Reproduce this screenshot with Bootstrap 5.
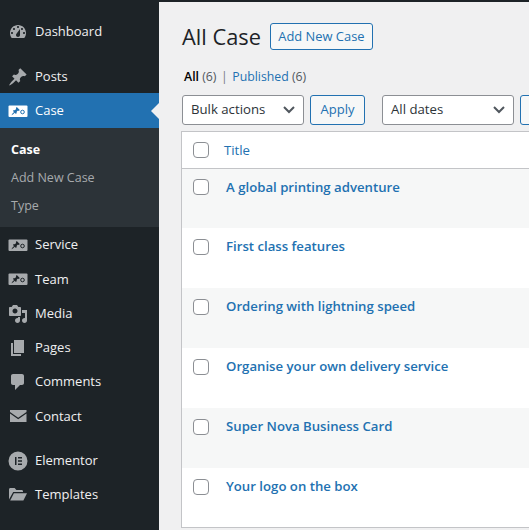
<!DOCTYPE html>
<html lang="en">
<head>
  <meta charset="UTF-8" />
  <title>All Case</title>
  <link href="https://cdn.jsdelivr.net/npm/bootstrap@5.3.0/dist/css/bootstrap.min.css" rel="stylesheet" />
  <style>
    html, body { height: 100%; overflow: hidden; }
    body { background: #f0f0f1; font-family: "Open Sans", "Noto Sans", sans-serif; font-size: 13px; color: #3c434a; }
    .wp-side { width: 159px; flex: none; background: #1d2327; padding-top: 14px; }
    .wp-item { height: 34.25px; padding-top: 1px; color: #f0f0f1; font-size: 13px; text-decoration: none; position: relative; }
    .wp-item:hover { color: #f0f0f1; }
    .wp-ico { width: 35px; flex: none; display: flex; justify-content: center; }
    .wp-ico svg { width: 20px; height: 20px; fill: #a7aaad; display: block; }
    .wp-gap { height: 10.9px; }
    .wp-gap-low { height: 10.4px; }
    .wp-active { background: #2271b1; color: #fff; height: 35px; padding-top: 0; }
    .wp-active::after { content: ""; position: absolute; right: 0; top: 10px; border: 8px solid transparent; border-right-color: #f0f0f1; border-left-width: 0; }
    .wp-sub { background: #2c3338; height: 99px; padding-top: 8px; }
    .wp-sub a { display: flex; align-items: center; height: 28.2px; padding-left: 11px; font-size: 12.5px; color: #a7aaad; text-decoration: none; }
    .wp-sub a.on { color: #fff; font-weight: 700; }
    .wp-main { min-width: 0; overflow: hidden; border-top: 2px solid #1d2327; padding-left: 22px; }
    .wp-head { margin-top: 21px; height: 27px; padding-left: 1px; }
    .wp-head h1 { font-size: 21.8px; font-weight: 400; color: #1d2327; margin: 0; padding-top: 2px; }
    .wp-btn { display: inline-flex; align-items: center; justify-content: center; flex: none; background: #f6f7f7; border: 1px solid #2271b1; border-radius: 3px; color: #2271b1; font-size: 12.9px; padding: 0; text-decoration: none; }
    .wp-add { width: 103px; height: 27px; margin-left: 9px; padding-top: 1px; }
    .wp-filters { margin-top: 18px; height: 18px; font-size: 12.3px; color: #50575e; padding-left: 3px; }
    .wp-filters a { color: #2271b1; text-decoration: none; }
    .wp-filters b { color: #000; font-weight: 600; }
    .wp-filters i { font-style: normal; color: #787c82; margin: 0 4.5px; }
    .wp-bar { margin-top: 9px; height: 30px; flex-wrap: nowrap; padding-left: 1px; }
    .wp-select { flex: none; height: 30px; border: 1px solid #8c8f94; border-radius: 3px; background: #fff; padding-left: 8px; padding-right: 8px; font-size: 13.2px; color: #2c3338; }
    .wp-select svg { width: 12px; height: 8px; fill: none; stroke: #50575e; stroke-width: 2; }
    .wp-bulk { width: 122px; }
    .wp-dates { width: 132px; margin-left: 17px; }
    .wp-apply { width: 55px; height: 30px; margin-left: 6px; font-size: 13px; }
    .wp-filter { width: 60px; height: 30px; margin-left: 6px; }
    .wp-table { margin-top: 6px; width: 420px; background: #fff; border: 1px solid #c3c4c7; }
    .wp-th { height: 37px; border-bottom: 1px solid #c3c4c7; color: #2271b1; font-size: 13.2px; }
    .wp-tr { height: 60px; align-items: flex-start; background: #fff; }
    .wp-tr:nth-child(odd) { background: #f6f7f7; }
    .wp-tr:first-child, .wp-tr:last-child { height: 59px; }
    .wp-tr a { color: #2271b1; font-weight: 600; font-size: 13.2px; text-decoration: none; line-height: 18px; margin-top: 8.5px; margin-left: 17px; }
    .wp-check { flex: none; width: 16px; height: 16px; border: 1px solid #8c8f94; border-radius: 4px; background: #fff; margin-left: 11px; }
    .wp-tr .wp-check { margin-top: 11px; }
    .wp-tr:first-child .wp-check { margin-top: 10px; }
    .wp-th span { margin-left: 15px; padding-top: 1px; }
  </style>
</head>
<body class="d-flex">
  <nav class="wp-side">
    <a class="wp-item d-flex align-items-center" href="#"><span class="wp-ico"><svg viewBox="0 0 20 20"><path fill-rule="evenodd" d="M3.76 16h12.48c1.100-1.370 1.760-3.110 1.760-5 0-4.420-3.580-8-8-8s-8 3.580-8 8c0 1.890.66 3.630 1.760 5zM10 4c.55 0 1 .45 1 1s-.45 1-1 1-1-.45-1-1 .45-1 1-1zM6 6c.55 0 1 .45 1 1s-.45 1-1 1-1-.45-1-1 .45-1 1-1zm8 0c.55 0 1 .45 1 1s-.45 1-1 1-1-.45-1-1 .45-1 1-1zm-5.370 5.550L12 7v6c0 1.100-.9 2-2 2s-2-.9-2-2c0-.57.24-1.080.63-1.450zM4 10c.55 0 1 .45 1 1s-.45 1-1 1-1-.45-1-1 .45-1 1-1zm12 0c.55 0 1 .45 1 1s-.45 1-1 1-1-.45-1-1 .45-1 1-1z"/></svg></span>Dashboard</a>
    <div class="wp-gap"></div>
    <a class="wp-item d-flex align-items-center" href="#"><span class="wp-ico"><svg viewBox="0 0 20 20"><path d="M10.440 3.020l1.820-1.820 6.360 6.350-1.830 1.820c-1.050-.68-2.480-.57-3.410.36l-.75.75c-.92.93-1.040 2.350-.35 3.410l-1.830 1.820-2.410-2.410-2.800 2.790c-.42.42-3.380 2.710-3.800 2.290s1.860-3.390 2.280-3.810l2.790-2.790L4.100 9.360l1.830-1.820c1.050.69 2.480.57 3.400-.36l.75-.75c.93-.92 1.050-2.350.36-3.410z"/></svg></span>Posts</a>
    <a class="wp-item wp-active d-flex align-items-center" href="#"><span class="wp-ico"><svg viewBox="0 0 20 20"><rect x=".5" y="4.500" width="19" height="11.500" rx="1" fill="#fff"/><path transform="translate(3 5.500) scale(.47)" d="M10.440 3.020l1.820-1.820 6.360 6.350-1.830 1.820c-1.050-.68-2.480-.57-3.410.36l-.75.75c-.92.93-1.040 2.350-.35 3.410l-1.830 1.820-2.410-2.410-2.800 2.790c-.42.42-3.380 2.710-3.800 2.290s1.860-3.390 2.280-3.810l2.790-2.790L4.100 9.360l1.830-1.820c1.050.69 2.480.57 3.400-.36l.75-.75c.93-.92 1.050-2.350.36-3.410z" fill="#2271b1"/><circle cx="14.500" cy="11" r="1.800" fill="none" stroke="#2271b1" stroke-width="1"/></svg></span>Case</a>
    <div class="wp-sub">
      <a class="on" href="#">Case</a>
      <a href="#">Add New Case</a>
      <a href="#">Type</a>
    </div>
    <a class="wp-item d-flex align-items-center" href="#"><span class="wp-ico"><svg viewBox="0 0 20 20"><rect x=".5" y="4.500" width="19" height="11.500" rx="1"/><path transform="translate(3 5.500) scale(.47)" d="M10.440 3.020l1.820-1.820 6.360 6.350-1.830 1.820c-1.050-.68-2.480-.57-3.410.36l-.75.75c-.92.93-1.040 2.350-.35 3.410l-1.830 1.820-2.410-2.410-2.800 2.790c-.42.42-3.380 2.710-3.800 2.290s1.860-3.390 2.280-3.810l2.790-2.790L4.100 9.360l1.830-1.820c1.050.69 2.480.57 3.400-.36l.75-.75c.93-.92 1.050-2.350.36-3.410z" fill="#1d2327"/><circle cx="14.500" cy="11" r="1.800" fill="none" stroke="#1d2327" stroke-width="1"/></svg></span>Service</a>
    <a class="wp-item d-flex align-items-center" href="#"><span class="wp-ico"><svg viewBox="0 0 20 20"><rect x=".5" y="4.500" width="19" height="11.500" rx="1"/><path transform="translate(3 5.500) scale(.47)" d="M10.440 3.020l1.820-1.820 6.360 6.350-1.830 1.820c-1.050-.68-2.480-.57-3.410.36l-.75.75c-.92.93-1.040 2.350-.35 3.410l-1.830 1.820-2.410-2.410-2.800 2.790c-.42.42-3.380 2.710-3.800 2.290s1.860-3.390 2.280-3.810l2.790-2.790L4.100 9.360l1.830-1.820c1.050.69 2.480.57 3.400-.36l.75-.75c.93-.92 1.050-2.350.36-3.410z" fill="#1d2327"/><circle cx="14.500" cy="11" r="1.800" fill="none" stroke="#1d2327" stroke-width="1"/></svg></span>Team</a>
    <a class="wp-item d-flex align-items-center" href="#"><span class="wp-ico"><svg viewBox="0 0 20 20"><path fill-rule="evenodd" d="M13 11V4c0-.55-.45-1-1-1h-1.670L9 1H5L3.670 3H2c-.55 0-1 .45-1 1v7c0 .55.45 1 1 1h10c.55 0 1-.45 1-1zM7 4.500c1.380 0 2.500 1.120 2.500 2.500S8.380 9.500 7 9.500 4.500 8.380 4.500 7 5.620 4.500 7 4.500zM14 6h5v10.500c0 1.380-1.120 2.500-2.500 2.500S14 17.880 14 16.500s1.120-2.500 2.500-2.500c.17 0 .34.020.5.050V9h-3V6zm-4 8.050V13h2v3.500c0 1.380-1.120 2.500-2.500 2.500S7 17.880 7 16.500 8.120 14 9.500 14c.17 0 .34.020.5.050z"/></svg></span>Media</a>
    <a class="wp-item d-flex align-items-center" href="#"><span class="wp-ico"><svg viewBox="0 0 20 20"><path d="M6 15V2h10v13H6zm-1 1h8v2H3V5h2v11z"/></svg></span>Pages</a>
    <a class="wp-item d-flex align-items-center" href="#"><span class="wp-ico"><svg viewBox="0 0 20 20"><path d="M5 2h9c1.100 0 2 .9 2 2v7c0 1.100-.9 2-2 2h-2l-5 5v-5H5c-1.100 0-2-.9-2-2V4c0-1.100.9-2 2-2z"/></svg></span>Comments</a>
    <a class="wp-item d-flex align-items-center" href="#"><span class="wp-ico"><svg viewBox="0 0 20 20"><path d="M2 4h16.500v2L10.200 11.800 2 6z"/><path d="M2 7.500l8.200 5.800 8.300-5.800V16H2z"/></svg></span>Contact</a>
    <div class="wp-gap-low"></div>
    <a class="wp-item d-flex align-items-center" href="#"><span class="wp-ico"><svg viewBox="0 0 20 20"><path fill-rule="evenodd" d="M10 .5a9.500 9.500 0 1 0 0 19 9.500 9.500 0 0 0 0-19zM7 6h1.500v8H7V6zm3 0h4v1.500h-4V6zm0 3.250h4v1.500h-4v-1.500zm0 3.250h4V14h-4v-1.500z"/></svg></span>Elementor</a>
    <a class="wp-item d-flex align-items-center" href="#"><span class="wp-ico"><svg viewBox="0 0 20 20"><path d="M1 14.500V4.500C1 3.700 1.600 3 2.400 3h4.200l1.800 2h5.300c.7 0 1.300.6 1.300 1.300V7H5.200L1 14.500z"/><path d="M2.200 15.500 5.900 8.200H19l-3.600 7.300z"/></svg></span>Templates</a>
  </nav>

  <main class="wp-main flex-grow-1">
    <div class="wp-head d-flex align-items-center">
      <h1>All Case</h1>
      <a class="wp-btn wp-add" href="#">Add New Case</a>
    </div>
    <div class="wp-filters d-flex align-items-center">
      <b>All</b>&nbsp;(6)<i>|</i><a href="#">Published</a>&nbsp;(6)
    </div>
    <div class="wp-bar d-flex">
      <div class="wp-select wp-bulk d-flex align-items-center justify-content-between">Bulk actions <svg viewBox="0 0 12 8"><path d="M1 1l5 5 5-5"/></svg></div>
      <a class="wp-btn wp-apply" href="#">Apply</a>
      <div class="wp-select wp-dates d-flex align-items-center justify-content-between">All dates <svg viewBox="0 0 12 8"><path d="M1 1l5 5 5-5"/></svg></div>
      <a class="wp-btn wp-filter" href="#"></a>
    </div>
    <div class="wp-table">
      <div class="wp-th d-flex align-items-center"><div class="wp-check"></div><span>Title</span></div>
      <div>
        <div class="wp-tr d-flex"><div class="wp-check"></div><a href="#">A global printing adventure</a></div>
        <div class="wp-tr d-flex"><div class="wp-check"></div><a href="#">First class features</a></div>
        <div class="wp-tr d-flex"><div class="wp-check"></div><a href="#">Ordering with lightning speed</a></div>
        <div class="wp-tr d-flex"><div class="wp-check"></div><a href="#">Organise your own delivery service</a></div>
        <div class="wp-tr d-flex"><div class="wp-check"></div><a href="#">Super Nova Business Card</a></div>
        <div class="wp-tr d-flex"><div class="wp-check"></div><a href="#">Your logo on the box</a></div>
      </div>
    </div>
  </main>
</body>
</html>
